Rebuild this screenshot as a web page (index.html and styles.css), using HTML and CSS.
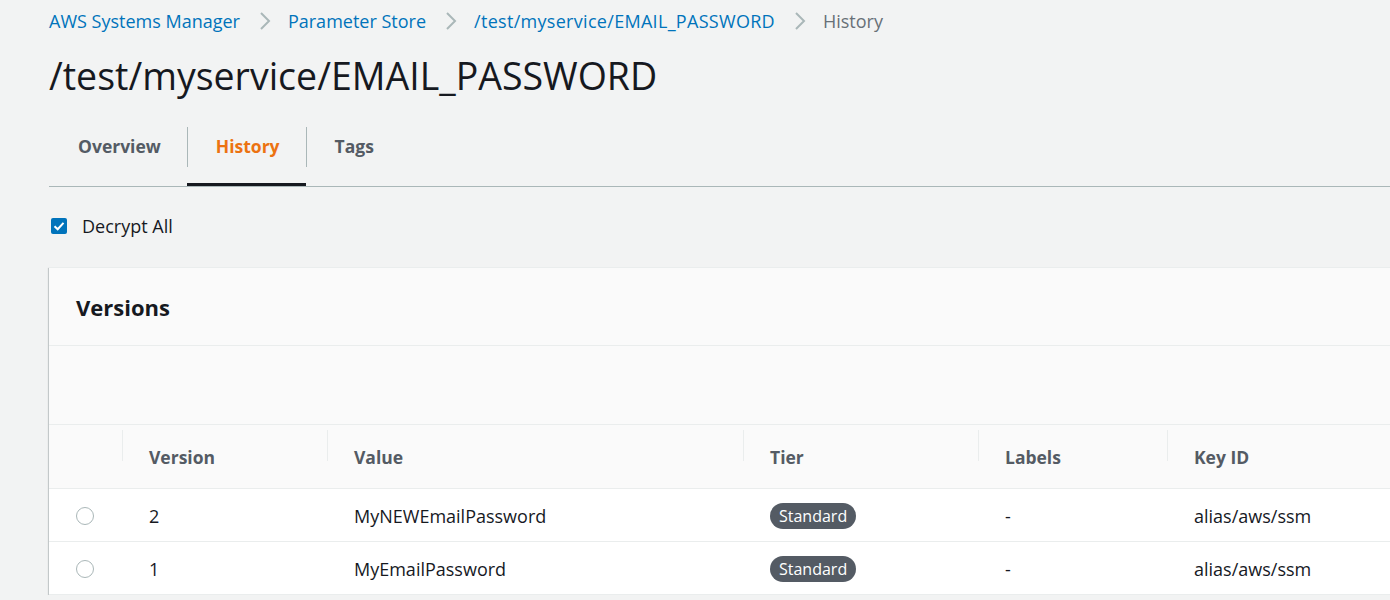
FILE: index.html
```html
<!DOCTYPE html>
<html>
<head>
<meta charset="utf-8">
<link rel="stylesheet" href="styles.css">
</head>
<body>
<div class="page">
  <nav class="crumbs">
    <a class="crumb-link">AWS Systems Manager</a>
    <svg class="chev" viewBox="0 0 12 20" width="12" height="20"><path d="M2 2 L10 10 L2 18" fill="none" stroke="#aab7b8" stroke-width="2"/></svg>
    <a class="crumb-link">Parameter Store</a>
    <svg class="chev" viewBox="0 0 12 20" width="12" height="20"><path d="M2 2 L10 10 L2 18" fill="none" stroke="#aab7b8" stroke-width="2"/></svg>
    <a class="crumb-link crumb-wide">/test/myservice/EMAIL_PASSWORD</a>
    <svg class="chev" viewBox="0 0 12 20" width="12" height="20"><path d="M2 2 L10 10 L2 18" fill="none" stroke="#aab7b8" stroke-width="2"/></svg>
    <span class="crumb-current">History</span>
  </nav>
  <h1 class="title">/test/myservice/EMAIL_PASSWORD</h1>
  <div class="tabs">
    <div class="tab"><span class="tab-label">Overview</span></div>
    <div class="tab active"><span class="tab-label">History</span></div>
    <div class="tab"><span class="tab-label">Tags</span></div>
  </div>
  <label class="check-row">
    <span class="checkbox"><svg viewBox="0 0 16 16" width="16" height="16"><path d="M3.5 8.2 L6.7 11.2 L12.5 4.8" fill="none" stroke="#fff" stroke-width="2"/></svg></span>
    <span class="check-text">Decrypt All</span>
  </label>
  <section class="panel">
    <div class="panel-head"><h2>Versions</h2></div>
    <div class="panel-filter"></div>
    <div class="grid head">
      <div class="cell"></div>
      <div class="cell th">Version</div>
      <div class="cell th">Value</div>
      <div class="cell th">Tier</div>
      <div class="cell th">Labels</div>
      <div class="cell th">Key ID</div>
    </div>
    <div class="grid row">
      <div class="cell radio-cell"><span class="radio"></span></div>
      <div class="cell">2</div>
      <div class="cell">MyNEWEmailPassword</div>
      <div class="cell"><span class="badge">Standard</span></div>
      <div class="cell">-</div>
      <div class="cell">alias/aws/ssm</div>
    </div>
    <div class="grid row">
      <div class="cell radio-cell"><span class="radio"></span></div>
      <div class="cell">1</div>
      <div class="cell">MyEmailPassword</div>
      <div class="cell"><span class="badge">Standard</span></div>
      <div class="cell">-</div>
      <div class="cell">alias/aws/ssm</div>
    </div>
  </section>
</div>
</body>
</html>
```
FILE: styles.css
```css
html, body {
  margin: 0;
  padding: 0;
  overflow: hidden;
  background: #f2f3f3;
}
body {
  font-family: "Open Sans", "Noto Sans", sans-serif;
  color: #16191f;
  font-size: 18px;
}
.page {
  width: 1500px;
  padding-left: 49px;
}
.crumbs {
  display: flex;
  align-items: center;
  height: 22px;
  margin-top: 10px;
  line-height: 22px;
}
.crumb-link {
  color: #0073bb;
}
.crumb-wide {
  letter-spacing: 0.3px;
}
.crumb-current {
  color: #687078;
}
.chev {
  margin: 0 17px 0 19px;
}
.title {
  margin: 0;
  margin-top: 21px;
  font-size: 37.5px;
  font-weight: 400;
  line-height: 46px;
  letter-spacing: 0;
}
.tabs {
  display: flex;
  margin-top: 15px;
  border-bottom: 1px solid #aab7b8;
  height: 72px;
  font-size: 17.5px;
}
.tab {
  position: relative;
  display: flex;
  align-items: center;
  padding: 0 26px 5px 29px;
  font-weight: 700;
  color: #545b64;
  height: 64px;
  border-bottom: 3px solid transparent;
}
.tab + .tab::before {
  content: "";
  position: absolute;
  left: 0;
  top: 13px;
  height: 40px;
  border-left: 1px solid #aab7b8;
}
.tab.active {
  color: #ec7211;
  border-bottom-color: #16191f;
}
.check-row {
  display: flex;
  align-items: center;
  margin-top: 30px;
  height: 18px;
}
.checkbox {
  width: 16px;
  height: 16px;
  margin-left: 2px;
  border-radius: 2px;
  background: #0073bb;
  display: flex;
}
.check-text {
  margin-left: 15px;
}
.panel {
  margin-top: 32px;
  background: #fafafa;
  box-shadow: 0 1px 1px 0 rgba(0,28,36,0.3), 1px 1px 1px 0 rgba(0,28,36,0.15), -1px 1px 1px 0 rgba(0,28,36,0.15);
  border-top: 1px solid #eaeded;
}
.panel-head {
  height: 77px;
  display: flex;
  align-items: center;
  padding-left: 27px;
  border-bottom: 1px solid #eaeded;
}
.panel-head h2 {
  margin: 0;
  font-size: 22px;
  font-weight: 700;
}
.panel-filter {
  height: 78px;
  border-bottom: 1px solid #eaeded;
}
.grid {
  display: grid;
  grid-template-columns: 73px 205px 416px 235px 189px 1fr;
  border-bottom: 1px solid #eaeded;
}
.head {
  height: 63px;
  align-items: center;
  color: #545b64;
  font-weight: 700;
  font-size: 17.5px;
}
.th {
  position: relative;
  padding-left: 27px;
}
.th::before {
  content: "";
  position: absolute;
  left: 0;
  top: -15px;
  height: 31px;
  border-left: 1px solid #eaeded;
}
.row {
  background: #fff;
  height: 51px;
  padding-top: 1px;
  align-items: center;
}
.row .cell {
  padding-left: 27px;
}
.row .radio-cell {
  padding-left: 27px;
  display: flex;
}
.radio {
  width: 16px;
  height: 16px;
  border: 1px solid #aab7b8;
  border-radius: 50%;
  background: #fff;
}
.badge {
  display: inline-block;
  background: #545b64;
  color: #fff;
  border-radius: 13px;
  height: 26px;
  line-height: 26px;
  padding: 0 9px;
  font-size: 16px;
  font-weight: 500;
}
```
